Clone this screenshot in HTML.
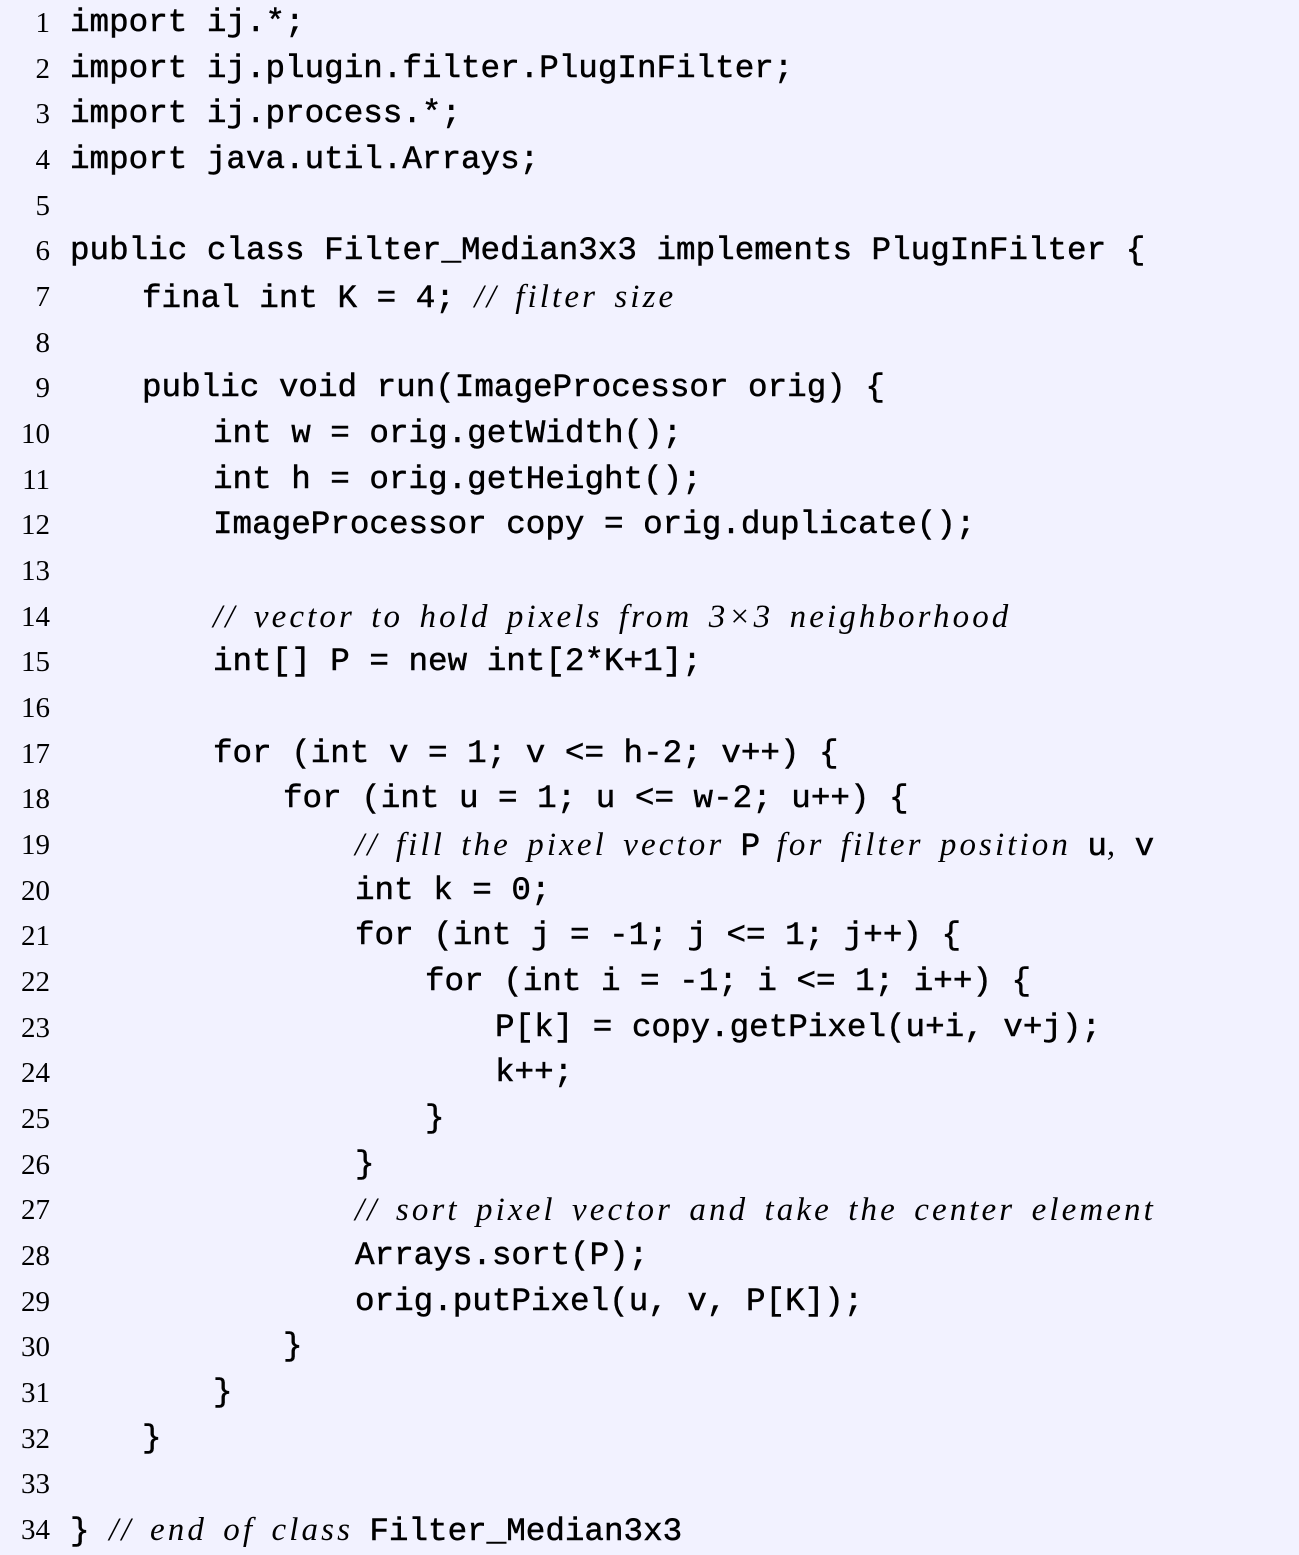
<!DOCTYPE html>
<html><head><meta charset="utf-8"><style>
html,body{margin:0;padding:0;}
body{width:1299px;height:1553px;background:#f2f2ff;position:relative;overflow:hidden;color:#000;}
.l{position:absolute;height:46px;line-height:46px;white-space:pre;font-family:"Liberation Mono",monospace;font-size:32.6px;-webkit-text-stroke:0.5px #000;}
.n{position:absolute;width:50px;text-align:right;left:0;height:46px;line-height:46px;font-family:"Liberation Serif",serif;font-size:29px;}
.c{font-family:"Liberation Serif",serif;font-style:italic;font-size:33px;-webkit-text-stroke:0;letter-spacing:3.1px;word-spacing:5px;}
</style></head><body>
<div class="n" style="top:0px">1</div><div class="l" style="top:0px;left:70px">import ij.*;</div>
<div class="n" style="top:45.7px">2</div><div class="l" style="top:45.7px;left:70px">import ij.plugin.filter.PlugInFilter;</div>
<div class="n" style="top:91.3px">3</div><div class="l" style="top:91.3px;left:70px">import ij.process.*;</div>
<div class="n" style="top:137px">4</div><div class="l" style="top:137px;left:70px">import java.util.Arrays;</div>
<div class="n" style="top:182.7px">5</div>
<div class="n" style="top:228.3px">6</div><div class="l" style="top:228.3px;left:70px">public class Filter_Median3x3 implements PlugInFilter {</div>
<div class="n" style="top:274px">7</div><div class="l" style="top:274px;left:142px">final int K = 4; <span class="c">// filter size</span></div>
<div class="n" style="top:319.7px">8</div>
<div class="n" style="top:365.3px">9</div><div class="l" style="top:365.3px;left:142px">public void run(ImageProcessor orig) {</div>
<div class="n" style="top:411px">10</div><div class="l" style="top:411px;left:213px">int w = orig.getWidth();</div>
<div class="n" style="top:456.7px">11</div><div class="l" style="top:456.7px;left:213px">int h = orig.getHeight();</div>
<div class="n" style="top:502.3px">12</div><div class="l" style="top:502.3px;left:213px">ImageProcessor copy = orig.duplicate();</div>
<div class="n" style="top:548px">13</div>
<div class="n" style="top:593.7px">14</div><div class="l" style="top:593.7px;left:213px"><span class="c">// vector to hold pixels from 3×3 neighborhood</span></div>
<div class="n" style="top:639.3px">15</div><div class="l" style="top:639.3px;left:213px">int[] P = new int[2*K+1];</div>
<div class="n" style="top:685px">16</div>
<div class="n" style="top:730.7px">17</div><div class="l" style="top:730.7px;left:213px">for (int v = 1; v &lt;= h-2; v++) {</div>
<div class="n" style="top:776.3px">18</div><div class="l" style="top:776.3px;left:283px">for (int u = 1; u &lt;= w-2; u++) {</div>
<div class="n" style="top:822px">19</div><div class="l" style="top:822px;left:355px"><span class="c">// fill the pixel vector </span>P<span class="c"> for filter position </span>u<span class="c">, </span>v</div>
<div class="n" style="top:867.7px">20</div><div class="l" style="top:867.7px;left:355px">int k = 0;</div>
<div class="n" style="top:913.3px">21</div><div class="l" style="top:913.3px;left:355px">for (int j = -1; j &lt;= 1; j++) {</div>
<div class="n" style="top:959px">22</div><div class="l" style="top:959px;left:425px">for (int i = -1; i &lt;= 1; i++) {</div>
<div class="n" style="top:1004.7px">23</div><div class="l" style="top:1004.7px;left:495px">P[k] = copy.getPixel(u+i, v+j);</div>
<div class="n" style="top:1050.3px">24</div><div class="l" style="top:1050.3px;left:495px">k++;</div>
<div class="n" style="top:1096px">25</div><div class="l" style="top:1096px;left:425px">}</div>
<div class="n" style="top:1141.7px">26</div><div class="l" style="top:1141.7px;left:355px">}</div>
<div class="n" style="top:1187.3px">27</div><div class="l" style="top:1187.3px;left:355px"><span class="c">// sort pixel vector and take the center element</span></div>
<div class="n" style="top:1233px">28</div><div class="l" style="top:1233px;left:355px">Arrays.sort(P);</div>
<div class="n" style="top:1278.7px">29</div><div class="l" style="top:1278.7px;left:355px">orig.putPixel(u, v, P[K]);</div>
<div class="n" style="top:1324.3px">30</div><div class="l" style="top:1324.3px;left:283px">}</div>
<div class="n" style="top:1370px">31</div><div class="l" style="top:1370px;left:213px">}</div>
<div class="n" style="top:1415.7px">32</div><div class="l" style="top:1415.7px;left:142px">}</div>
<div class="n" style="top:1461.3px">33</div>
<div class="n" style="top:1507px">34</div><div class="l" style="top:1507px;left:70px">} <span class="c">// end of class </span>Filter_Median3x3</div>
</body></html>
